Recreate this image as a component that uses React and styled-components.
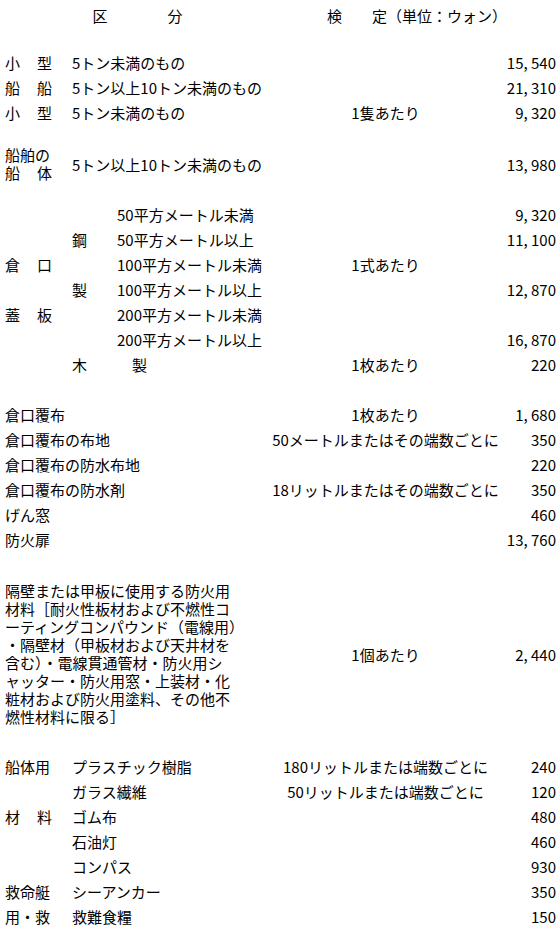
import React from 'react';
import styled, { createGlobalStyle } from 'styled-components';

const GlobalStyle = createGlobalStyle`
    html, body {
        margin: 0;
        padding: 0;
        background: #fff;
    }
    body {
        font-family: "Noto Sans CJK JP", "Noto Sans", sans-serif;
        font-size: 15px;
        color: #000;
    }
`

const Sheet = styled.div`
    width: 560px;
    box-sizing: border-box;
    padding: 3px 4px 0 5px;
`

const Section = styled.div`
    margin-top: ${props => props.$gap || 0}px;
`

const Row = styled.div`
    display: grid;
    grid-template-columns: 67px 45px 153px 231px 55px;
    align-items: center;
    min-height: ${props => props.$height || 25}px;
    line-height: 25px;
    white-space: nowrap;
`

const HeadLeft = styled.div`
    grid-column: 1 / 4;
    text-align: center;
`

const HeadRight = styled.div`
    grid-column: 4 / 6;
    text-align: center;
    padding-left: 8px;
`

const Category = styled.div`
    grid-column: 1;
    line-height: 18px;
`

const Spread = styled.span`
    display: flex;
    justify-content: space-between;
    width: 47px;
`

const Material = styled.div`
    grid-column: 2;
`

const Item = styled.div`
    grid-column: ${props => props.$from || 2} / 4;
    padding-left: ${props => props.$indent || 0}px;
`

const Unit = styled.div`
    grid-column: 4;
    text-align: center;
`

const Amount = styled.div`
    grid-column: 5;
    text-align: right;
`

const Note = styled.div`
    grid-column: 1 / 4;
    line-height: 18px;
    white-space: nowrap;
`

const spread = text => (
    <Spread>
        {[...text].map((ch, i) => <span key={i}>{ch}</span>)}
    </Spread>
)

const smallBoats = [
    { cat: '小型', item: '5トン未満のもの', amount: '15, 540' },
    { cat: '船船', item: '5トン以上10トン未満のもの', amount: '21, 310' },
    { cat: '小型', item: '5トン未満のもの', unit: '1隻あたり', amount: '9, 320' },
];

const hatchCovers = [
    { size: '50平方メートル未満', amount: '9, 320' },
    { mat: '鋼', size: '50平方メートル以上', amount: '11, 100' },
    { cat: '倉口', size: '100平方メートル未満', unit: '1式あたり' },
    { mat: '製', size: '100平方メートル以上', amount: '12, 870' },
    { cat: '蓋板', size: '200平方メートル未満' },
    { size: '200平方メートル以上', amount: '16, 870' },
    { mat: '木', size: '製', indent: 15, unit: '1枚あたり', amount: '220' },
];

const hatchCloths = [
    { name: '倉口覆布', unit: '1枚あたり', amount: '1, 680' },
    { name: '倉口覆布の布地', unit: '50メートルまたはその端数ごとに', amount: '350' },
    { name: '倉口覆布の防水布地', amount: '220' },
    { name: '倉口覆布の防水剤', unit: '18リットルまたはその端数ごとに', amount: '350' },
    { name: 'げん窓', amount: '460' },
    { name: '防火扉', amount: '13, 760' },
];

const noteLines = [
    '隔壁または甲板に使用する防火用',
    '材料［耐火性板材および不燃性コ',
    'ーティングコンパウンド（電線用）',
    '・隔壁材（甲板材および天井材を',
    '含む）・電線貫通管材・防火用シ',
    'ャッター・防火用窓・上装材・化',
    '粧材および防火用塗料、その他不',
    '燃性材料に限る］',
];

const materials = [
    { cat: '船体用', item: 'プラスチック樹脂', unit: '180リットルまたは端数ごとに', amount: '240' },
    { item: 'ガラス繊維', unit: '50リットルまたは端数ごとに', amount: '120' },
    { cat: spread('材料'), item: 'ゴム布', amount: '480' },
    { item: '石油灯', amount: '460' },
    { item: 'コンパス', amount: '930' },
    { cat: '救命艇', item: 'シーアンカー', amount: '350' },
    { cat: '用・救', item: '救難食糧', amount: '150' },
];

class App extends React.Component {
    render() {
        return (
            <Sheet>
                <GlobalStyle />
                <Row>
                    <HeadLeft>区　　　　分</HeadLeft>
                    <HeadRight>検　　定（単位：ウォン）</HeadRight>
                </Row>

                <Section $gap={22}>
                    {smallBoats.map((r, i) => (
                        <Row key={i}>
                            <Category>{spread(r.cat)}</Category>
                            <Item>{r.item}</Item>
                            {r.unit && <Unit>{r.unit}</Unit>}
                            <Amount>{r.amount}</Amount>
                        </Row>
                    ))}
                </Section>

                <Section $gap={21}>
                    <Row $height={36}>
                        <Category>
                            <div>船舶の</div>
                            {spread('船体')}
                        </Category>
                        <Item>5トン以上10トン未満のもの</Item>
                        <Amount>13, 980</Amount>
                    </Row>
                </Section>

                <Section $gap={20}>
                    {hatchCovers.map((r, i) => (
                        <Row key={i}>
                            {r.cat && <Category>{spread(r.cat)}</Category>}
                            {r.mat && <Material>{r.mat}</Material>}
                            <Item $from={3} $indent={r.indent}>{r.size}</Item>
                            {r.unit && <Unit>{r.unit}</Unit>}
                            {r.amount && <Amount>{r.amount}</Amount>}
                        </Row>
                    ))}
                </Section>

                <Section $gap={25}>
                    {hatchCloths.map((r, i) => (
                        <Row key={i}>
                            <Item $from={1}>{r.name}</Item>
                            {r.unit && <Unit>{r.unit}</Unit>}
                            <Amount>{r.amount}</Amount>
                        </Row>
                    ))}
                </Section>

                <Section $gap={30}>
                    <Row>
                        <Note>
                            {noteLines.map((line, i) => <div key={i}>{line}</div>)}
                        </Note>
                        <Unit>1個あたり</Unit>
                        <Amount>2, 440</Amount>
                    </Row>
                </Section>

                <Section $gap={28}>
                    {materials.map((r, i) => (
                        <Row key={i}>
                            {r.cat && <Category>{r.cat}</Category>}
                            <Item>{r.item}</Item>
                            {r.unit && <Unit>{r.unit}</Unit>}
                            <Amount>{r.amount}</Amount>
                        </Row>
                    ))}
                </Section>
            </Sheet>
        );
    }
}

export default App;
